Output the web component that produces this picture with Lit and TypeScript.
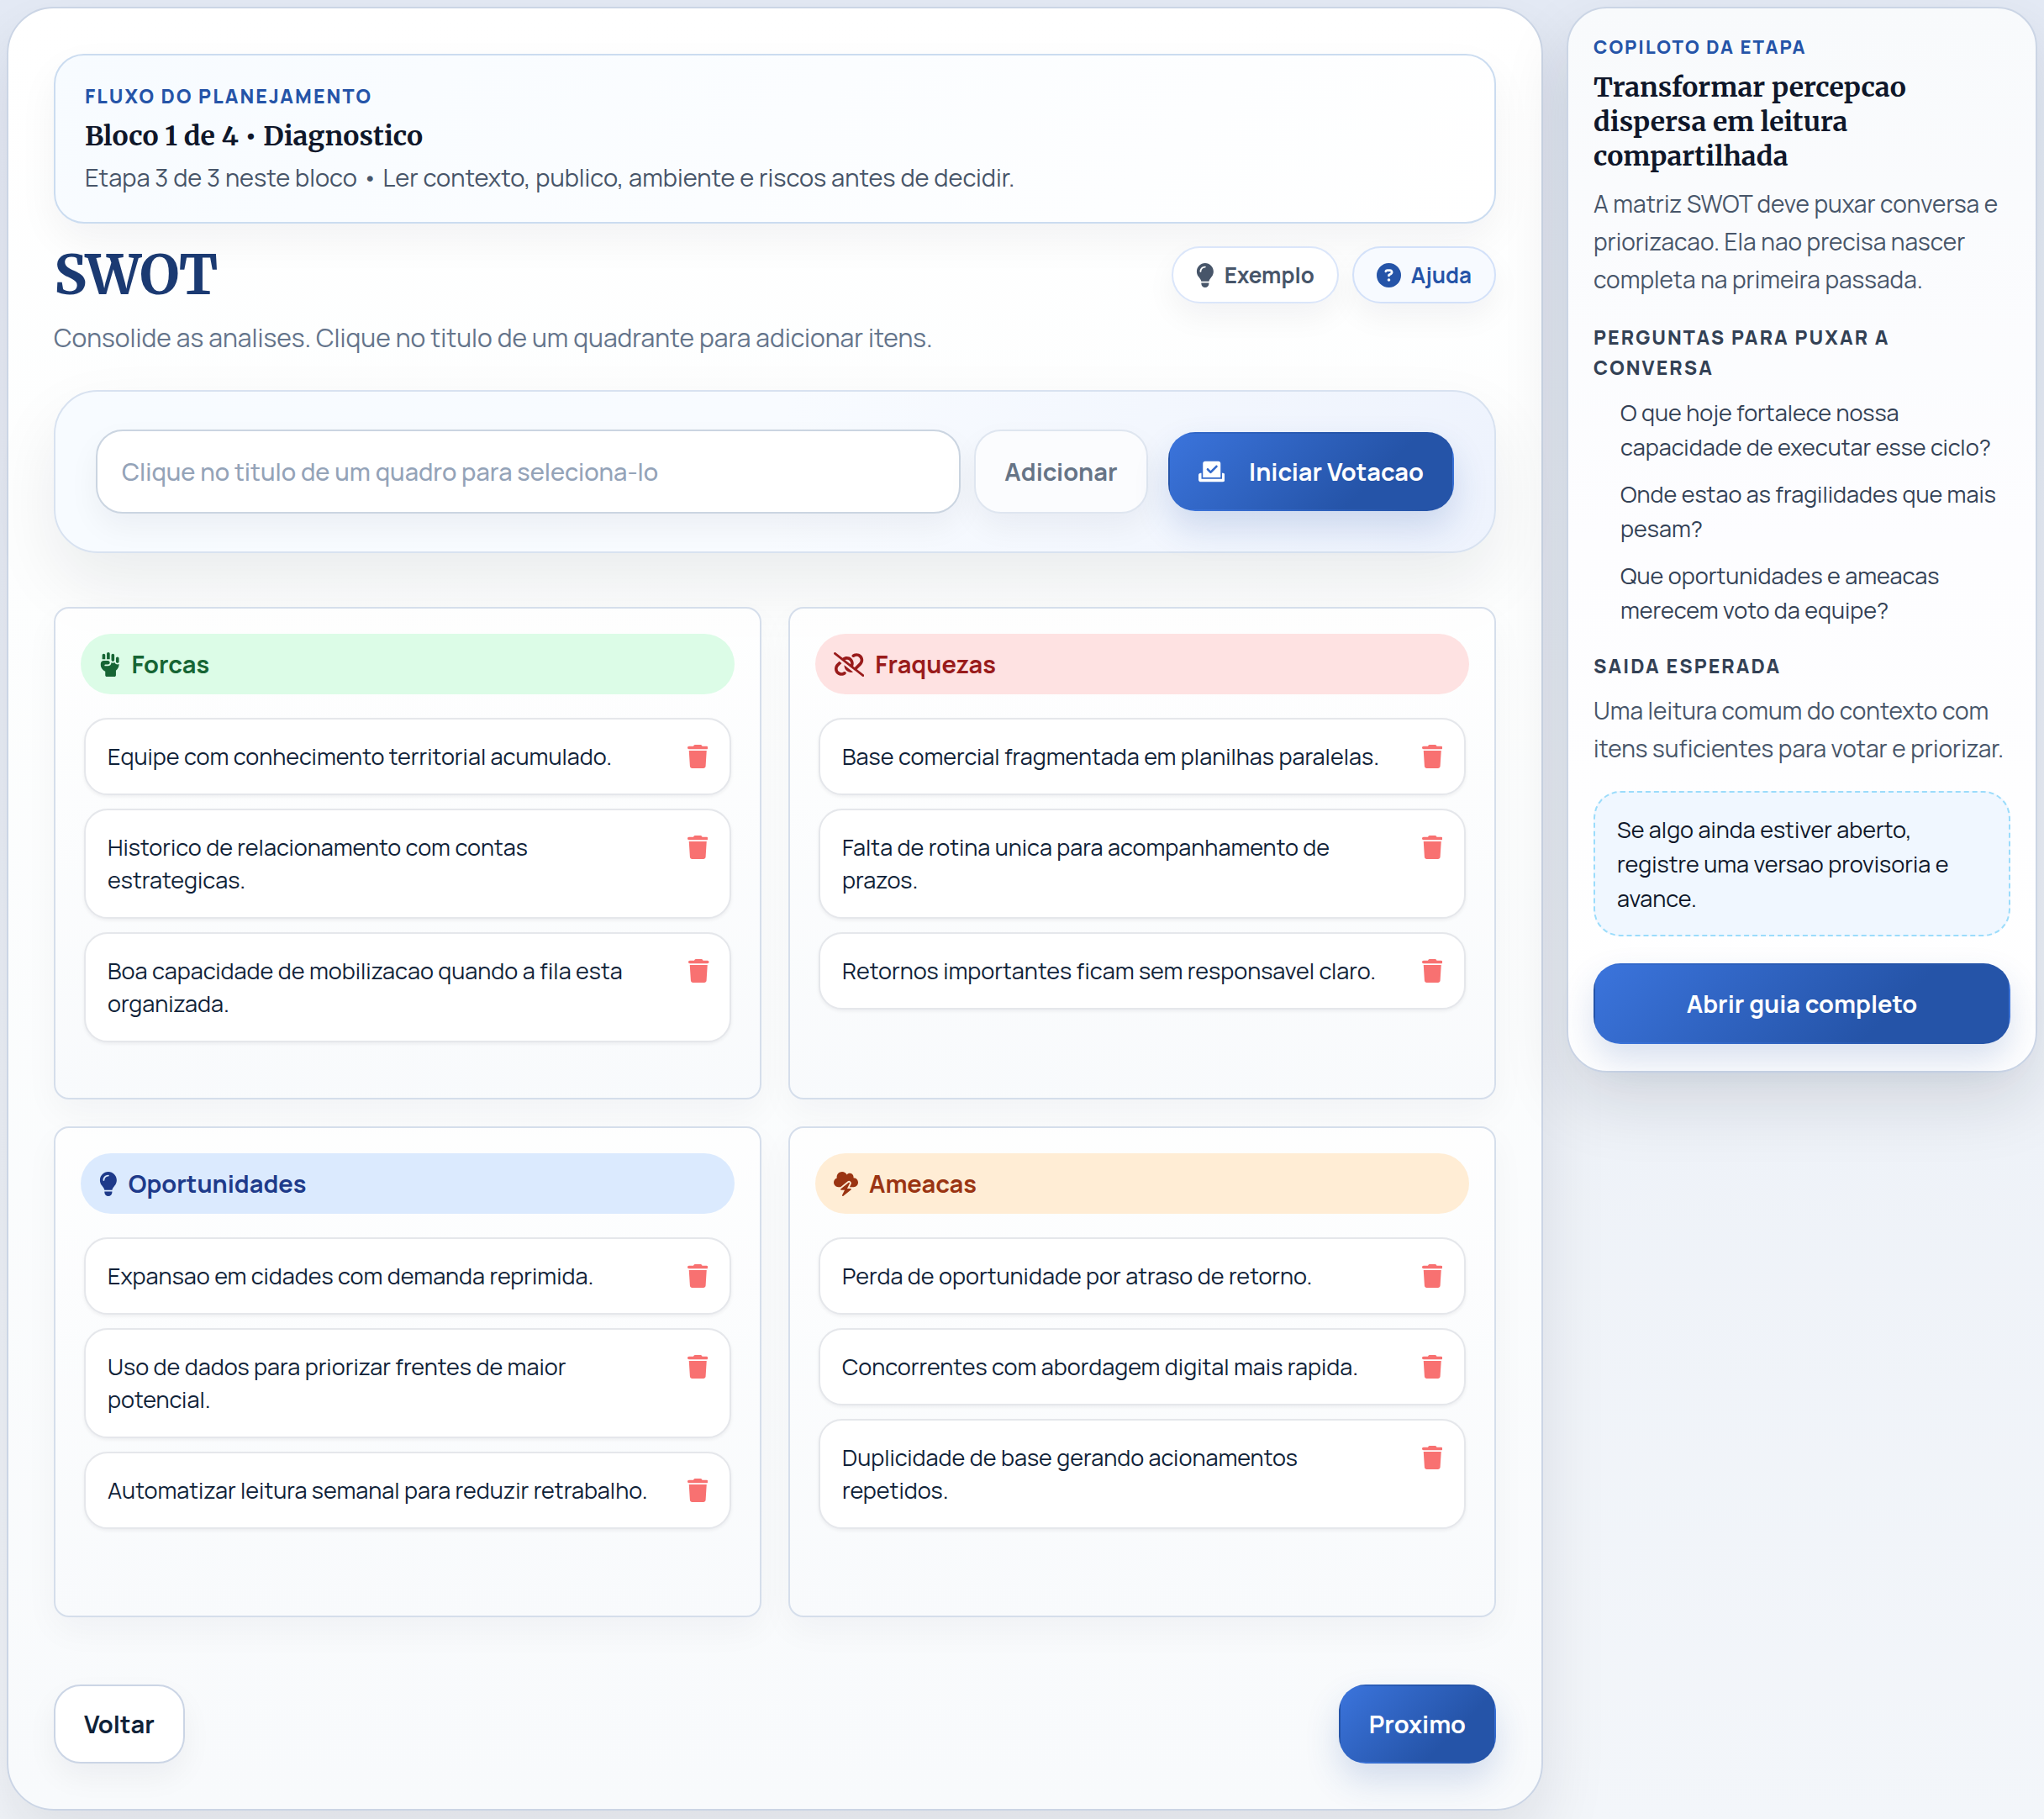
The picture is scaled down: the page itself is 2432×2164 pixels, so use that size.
import { LitElement, html, css, svg } from "lit";
import { customElement, property, state } from "lit/decorators.js";

type IconName = "bulb" | "help" | "fist" | "unlink" | "storm" | "trash" | "vote";

const ICONS: Record<IconName, { width: number; path: string }> = {
  bulb: { width: 384, path: "M272 384c9.6-31.9 29.5-59.1 49.2-86.2l0 0c5.2-7.1 10.4-14.2 15.4-21.4c19.8-28.5 31.4-63 31.4-100.3C368 78.8 289.2 0 192 0S16 78.8 16 176c0 37.3 11.6 71.9 31.4 100.3c5 7.2 10.2 14.3 15.4 21.4l0 0c19.8 27.1 39.7 54.4 49.2 86.2H272zM192 512c44.2 0 80-35.8 80-80V416H112v16c0 44.2 35.8 80 80 80zM112 176c0 8.8-7.2 16-16 16s-16-7.2-16-16c0-61.9 50.1-112 112-112c8.8 0 16 7.2 16 16s-7.2 16-16 16c-44.2 0-80 35.8-80 80z" },
  help: { width: 512, path: "M256 512A256 256 0 1 0 256 0a256 256 0 1 0 0 512zM169.8 165.3c7.9-22.3 29.1-37.3 52.8-37.3h58.3c34.9 0 63.1 28.3 63.1 63.1c0 22.6-12.1 43.5-31.7 54.8L280 264.4c-.2 13-10.9 23.6-24 23.6c-13.3 0-24-10.7-24-24V250.5c0-8.6 4.6-16.5 12.1-20.8l44.3-25.4c4.7-2.7 7.6-7.7 7.6-13.1c0-8.4-6.8-15.1-15.1-15.1H222.6c-3.4 0-6.4 2.1-7.5 5.3l-.4 1.2c-4.4 12.5-18.2 19-30.6 14.6s-19-18.2-14.6-30.6l.4-1.2zM224 352a32 32 0 1 1 64 0 32 32 0 1 1 -64 0z" },
  fist: { width: 448, path: "M192 0c17.7 0 32 14.3 32 32V144H160V32c0-17.7 14.3-32 32-32zM64 64c0-17.7 14.3-32 32-32s32 14.3 32 32v80H64V64zm192 0c0-17.7 14.3-32 32-32s32 14.3 32 32v96c0 17.7-14.3 32-32 32s-32-14.3-32-32V64zm96 64c0-17.7 14.3-32 32-32s32 14.3 32 32v64c0 17.7-14.3 32-32 32s-32-14.3-32-32V128zm-96 88l0-.6c9.4 5.4 20.3 8.6 32 8.6c13.2 0 25.4-4 35.6-10.8c8.7 24.9 32.5 42.8 60.4 42.8c11.7 0 22.6-3.1 32-8.6V256c0 52.3-25.1 98.8-64 128v96c0 17.7-14.3 32-32 32H160c-17.7 0-32-14.3-32-32V401.6c-17.3-7.9-33.2-18.8-46.9-32.5L69.5 357.5C45.5 333.5 32 300.9 32 267V240c0-35.3 28.7-64 64-64h88c22.1 0 40 17.9 40 40s-17.9 40-40 40H128c-8.8 0-16 7.2-16 16s7.2 16 16 16h56c39.8 0 72-32.2 72-72z" },
  unlink: { width: 640, path: "M38.8 5.1C28.4-3.1 13.3-1.2 5.1 9.2S-1.2 34.7 9.2 42.9l592 464c10.4 8.2 25.5 6.3 33.7-4.1s6.3-25.5-4.1-33.7L489.3 358.2l90.5-90.5c56.5-56.5 56.5-148 0-204.5c-50-50-128.8-56.5-186.3-15.4l-1.6 1.1c-14.4 10.3-17.7 30.3-7.4 44.6s30.3 17.7 44.6 7.4l1.6-1.1c32.1-22.9 76-19.3 103.8 8.6c31.5 31.5 31.5 82.5 0 114l-96 96-31.9-25C430.9 239.6 420.1 175.1 377 132c-52.2-52.3-134.5-56.2-191.3-11.7L38.8 5.1zM239 162c30.1-14.9 67.7-9.9 92.8 15.3c20 20 27.5 48.3 21.7 74.5L239 162zM406.6 416.4L220.9 270c-2.1 39.8 12.2 80.1 42.2 110c38.9 38.9 94.4 51 143.6 36.3zm-290-228.5L60.2 244.3c-56.5 56.5-56.5 148 0 204.5c50 50 128.8 56.5 186.3 15.4l1.6-1.1c14.4-10.3 17.7-30.3 7.4-44.6s-30.3-17.7-44.6-7.4l-1.6 1.1c-32.1 22.9-76 19.3-103.8-8.6C74 372 74 321 105.5 289.5l61.8-61.8-50.6-39.9z" },
  storm: { width: 512, path: "M0 224c0 53 43 96 96 96h47.2L290 202.5c17.6-14.1 42.6-14 60.2 .2s22.8 38.6 12.8 58.8L333.7 320H352h64c53 0 96-43 96-96s-43-96-96-96c-.5 0-1.1 0-1.6 0c1.1-5.2 1.6-10.5 1.6-16c0-44.2-35.8-80-80-80c-24.3 0-46.1 10.9-60.8 28C256.5 24.3 219.1 0 176 0C114.1 0 64 50.1 64 112c0 7.1 .7 14.1 1.9 20.8C27.6 145.4 0 181.5 0 224zm330.1 3.6c-5.8-4.7-14.2-4.7-20.1-.1l-160 128c-5.3 4.2-7.4 11.4-5.1 17.8s8.3 10.7 15.1 10.7h70.1L177.7 488.8c-3.4 6.7-1.6 14.9 4.3 19.6s14.2 4.7 20.1 .1l160-128c5.3-4.2 7.4-11.4 5.1-17.8s-8.3-10.7-15.1-10.7H281.9l52.4-104.8c3.4-6.7 1.6-14.9-4.3-19.6z" },
  trash: { width: 448, path: "M135.2 17.7L128 32H32C14.3 32 0 46.3 0 64S14.3 96 32 96H416c17.7 0 32-14.3 32-32s-14.3-32-32-32H320l-7.2-14.3C307.4 6.8 296.3 0 284.2 0H163.8c-12.1 0-23.2 6.8-28.6 17.7zM416 128H32L53.2 467c1.6 25.3 22.6 45 47.9 45H346.9c25.3 0 46.3-19.7 47.9-45L416 128z" },
  vote: { width: 576, path: "M96 80c0-26.5 21.5-48 48-48H432c26.5 0 48 21.5 48 48V384H96V80zm313 47c-9.4-9.4-24.6-9.4-33.9 0l-111 111-47-47c-9.4-9.4-24.6-9.4-33.9 0s-9.4 24.6 0 33.9l64 64c9.4 9.4 24.6 9.4 33.9 0L409 161c9.4-9.4 9.4-24.6 0-33.9zM0 336c0-26.5 21.5-48 48-48H64V416H512V288h16c26.5 0 48 21.5 48 48v96c0 26.5-21.5 48-48 48H48c-26.5 0-48-21.5-48-48V336z" },
};

const icon = (name: IconName) => html`<svg
  class="icon"
  viewBox="0 0 ${ICONS[name].width} 512"
  aria-hidden="true"
>${svg`<path fill="currentColor" d=${ICONS[name].path}></path>`}</svg>`;

interface Quadrant {
  id: string;
  title: string;
  icon: IconName;
  items: string[];
}

const QUADRANTS: Quadrant[] = [
  {
    id: "forcas",
    title: "Forcas",
    icon: "fist",
    items: [
      "Equipe com conhecimento territorial acumulado.",
      "Historico de relacionamento com contas estrategicas.",
      "Boa capacidade de mobilizacao quando a fila esta organizada.",
    ],
  },
  {
    id: "fraquezas",
    title: "Fraquezas",
    icon: "unlink",
    items: [
      "Base comercial fragmentada em planilhas paralelas.",
      "Falta de rotina unica para acompanhamento de prazos.",
      "Retornos importantes ficam sem responsavel claro.",
    ],
  },
  {
    id: "oportunidades",
    title: "Oportunidades",
    icon: "bulb",
    items: [
      "Expansao em cidades com demanda reprimida.",
      "Uso de dados para priorizar frentes de maior potencial.",
      "Automatizar leitura semanal para reduzir retrabalho.",
    ],
  },
  {
    id: "ameacas",
    title: "Ameacas",
    icon: "storm",
    items: [
      "Perda de oportunidade por atraso de retorno.",
      "Concorrentes com abordagem digital mais rapida.",
      "Duplicidade de base gerando acionamentos repetidos.",
    ],
  },
];

const shared = css`
  * {
    box-sizing: border-box;
  }
  h1,
  h2,
  h3,
  p,
  ul {
    margin: 0;
    padding: 0;
  }
  ul {
    list-style: none;
  }
  button {
    font-family: inherit;
    cursor: pointer;
  }
  .icon {
    display: block;
    flex: none;
    height: 29px;
    width: auto;
  }
  .eyebrow {
    color: #2554a8;
    font-size: 23px;
    font-weight: 800;
    line-height: 36px;
    letter-spacing: 0.09em;
    text-transform: uppercase;
  }
  .title {
    margin-top: 10px;
    color: #0f172a;
    font-family: Merriweather, "Noto Serif", "DejaVu Serif", serif;
    font-size: 32px;
    font-weight: 700;
    line-height: 41px;
  }
  .btn {
    display: inline-flex;
    align-items: center;
    justify-content: center;
    gap: 29px;
    padding: 0 34px;
    height: 94px;
    border: 2px solid #cbd5e5;
    border-radius: 32px;
    background: #fff;
    color: #0f2238;
    font-size: 29px;
    font-weight: 700;
    white-space: nowrap;
    box-shadow: 0 16px 36px rgba(15, 23, 42, 0.05);
  }
  .btn.primary {
    border-color: transparent;
    background: linear-gradient(135deg, #3b74dc 0%, #2554a8 70%);
    color: #fff;
    box-shadow: 0 20px 40px rgba(37, 84, 168, 0.18);
  }
  .btn .icon {
    height: 28px;
  }
`;

@customElement("swot-quadrant")
export class SwotQuadrant extends LitElement {
  @property({ attribute: false }) data!: Quadrant;

  static styles = [
    shared,
    css`
      :host {
        display: block;
        min-height: 584px;
        padding: 30px 30px 66px;
        border: 2px solid #d5deeb;
        border-radius: 18px;
        background: linear-gradient(180deg, rgba(255, 255, 255, 0.7), rgba(248, 250, 252, 0.9));
        box-shadow: 0 16px 40px rgba(15, 23, 42, 0.04);
      }
      .heading {
        display: flex;
        align-items: center;
        gap: 13px;
        width: 100%;
        height: 72px;
        padding: 0 22px;
        border: 0;
        border-radius: 36px;
        font-size: 29px;
        font-weight: 700;
      }
      .forcas {
        background: #dcfce7;
        color: #166534;
      }
      .fraquezas {
        background: #fee2e2;
        color: #991b1b;
      }
      .oportunidades {
        background: #dbeafe;
        color: #1e3a8a;
      }
      .ameacas {
        background: #ffedd5;
        color: #9a3412;
      }
      .list {
        display: flex;
        flex-direction: column;
        gap: 16px;
        padding: 28px 4px 0;
      }
      .item {
        display: flex;
        align-items: flex-start;
        justify-content: space-between;
        gap: 36px;
        padding: 24px 26px 25px;
        border: 2px solid #e5e7eb;
        border-radius: 28px;
        background: #fff;
        color: #0f2238;
        font-size: 27px;
        line-height: 39px;
        box-shadow: 0 2px 4px rgba(15, 23, 42, 0.06);
      }
      .remove {
        display: grid;
        place-items: center;
        height: 39px;
        padding: 0;
        border: 0;
        background: none;
        color: #f87171;
      }
      .remove .icon {
        height: 28px;
      }
    `,
  ];

  render() {
    const { id, title, items } = this.data;
    return html`
      <h3><button class="heading ${id}" type="button">${icon(this.data.icon)}${title}</button></h3>
      <ul class="list">
        ${items.map(
          (text) => html`<li class="item">
            <span>${text}</span>
            <button class="remove" type="button" aria-label="Remover">${icon("trash")}</button>
          </li>`,
        )}
      </ul>
    `;
  }
}

@customElement("step-copilot")
export class StepCopilot extends LitElement {
  static styles = [
    shared,
    css`
      :host {
        display: block;
        padding: 28px 30px 32px;
        border: 2px solid #cbd5e5;
        border-radius: 48px;
        background: linear-gradient(180deg, #f8fafc, #fdfdff 50%, #fff);
        box-shadow: 0 36px 80px rgba(15, 23, 42, 0.12);
      }
      .lead-in {
        font-size: 22px;
      }
      .text {
        margin-top: 13px;
        color: #475569;
        font-size: 28px;
        line-height: 45px;
      }
      .section {
        margin-top: 28px;
        color: #334155;
      }
      .questions {
        display: flex;
        flex-direction: column;
        gap: 15px;
        margin-top: 15px;
        padding-left: 32px;
        color: #334155;
        font-size: 27px;
        line-height: 41px;
      }
      .note {
        margin-top: 28px;
        padding: 23px 26px;
        border: 2px dashed #9bdcfb;
        border-radius: 32px;
        background: #f0f7ff;
        color: #0f172a;
        font-size: 27px;
        line-height: 41px;
      }
      .guide {
        width: 100%;
        height: 96px;
        margin-top: 32px;
      }
    `,
  ];

  render() {
    return html`
      <p class="eyebrow lead-in">Copiloto da etapa</p>
      <h2 class="title">Transformar percepcao dispersa em leitura compartilhada</h2>
      <p class="text">A matriz SWOT deve puxar conversa e priorizacao. Ela nao precisa nascer completa na primeira passada.</p>
      <h3 class="eyebrow section">Perguntas para puxar a conversa</h3>
      <ul class="questions">
        <li>O que hoje fortalece nossa capacidade de executar esse ciclo?</li>
        <li>Onde estao as fragilidades que mais pesam?</li>
        <li>Que oportunidades e ameacas merecem voto da equipe?</li>
      </ul>
      <h3 class="eyebrow section">Saida esperada</h3>
      <p class="text">Uma leitura comum do contexto com itens suficientes para votar e priorizar.</p>
      <p class="note">Se algo ainda estiver aberto, registre uma versao provisoria e avance.</p>
      <button class="btn primary guide" type="button">Abrir guia completo</button>
    `;
  }
}

@customElement("app-root")
export class AppRoot extends LitElement {
  @state() private draft = "";

  static styles = [
    shared,
    css`
      :host {
        display: grid;
        grid-template-columns: minmax(0, 1fr) 560px;
        align-items: start;
        gap: 28px;
        min-height: 100vh;
        padding: 8px 8px 10px;
        background: linear-gradient(180deg, #e4eaf5, #eef2f8 60%, #f3f6fa);
        font-family: Manrope, Inter, "Open Sans", sans-serif;
      }
      .board {
        padding: 54px;
        border: 2px solid #cbd5e5;
        border-radius: 56px;
        background: linear-gradient(180deg, #fff, #fdfefe 30%, #f8fafc);
        box-shadow: 0 36px 80px rgba(15, 23, 42, 0.1);
      }
      .flow {
        padding: 30px 35px;
        border: 2px solid #cbdcf0;
        border-radius: 36px;
        background: linear-gradient(135deg, #f7fbff, #fff);
        box-shadow: 0 20px 48px rgba(15, 23, 42, 0.05);
      }
      .flow-text {
        margin-top: 6px;
        color: #475569;
        font-size: 29px;
        line-height: 45px;
      }
      .head {
        display: flex;
        align-items: center;
        justify-content: space-between;
        margin-top: 24px;
      }
      .name {
        color: #1b3a72;
        font-family: Merriweather, "Noto Serif", "DejaVu Serif", serif;
        font-size: 65px;
        font-weight: 700;
        line-height: 74px;
        letter-spacing: -0.02em;
      }
      .actions {
        display: flex;
        gap: 16px;
      }
      .pill {
        display: inline-flex;
        align-items: center;
        gap: 12px;
        height: 68px;
        padding: 0 27px;
        border: 2px solid #dbe6fa;
        border-radius: 34px;
        background: #fff;
        color: #475569;
        font-size: 26px;
        font-weight: 700;
        box-shadow: 0 16px 36px rgba(15, 23, 42, 0.05);
      }
      .pill.help {
        border-color: #d3e1f9;
        background: #f7faff;
        color: #2554a8;
      }
      .lead {
        margin-top: 14px;
        color: #64748b;
        font-size: 30px;
        line-height: 48px;
      }
      .composer {
        display: flex;
        align-items: center;
        gap: 24px;
        margin-top: 38px;
        padding: 45px 48px;
        border: 2px solid #d8e2f0;
        border-radius: 52px;
        background: linear-gradient(100deg, #f7fbff, #f8fbff 50%, #eef3fd);
        box-shadow: 0 36px 80px rgba(15, 23, 42, 0.08);
      }
      .entry {
        display: flex;
        flex: 1;
        gap: 16px;
        min-width: 0;
      }
      .field {
        flex: 1;
        min-width: 0;
        height: 100px;
        padding: 0 29px;
        border: 2px solid #cbd5e1;
        border-radius: 32px;
        background: #fff;
        font: inherit;
        font-size: 29px;
        font-weight: 500;
        color: #0f172a;
        box-shadow: 0 16px 36px rgba(15, 23, 42, 0.05);
      }
      .field::placeholder {
        color: #94a3b8;
        opacity: 1;
      }
      .entry .btn {
        height: 100px;
        border-color: #dfe6f0;
        background: #fbfcfe;
        color: #667486;
      }
      .quadrants {
        display: grid;
        grid-template-columns: repeat(2, minmax(0, 1fr));
        gap: 32px;
        margin-top: 64px;
      }
      .footer {
        display: flex;
        justify-content: space-between;
        margin-top: 80px;
      }
    `,
  ];

  render() {
    return html`
      <main class="board">
        <section class="flow">
          <p class="eyebrow">Fluxo do planejamento</p>
          <h2 class="title">Bloco 1 de 4 • Diagnostico</h2>
          <p class="flow-text">Etapa 3 de 3 neste bloco • Ler contexto, publico, ambiente e riscos antes de decidir.</p>
        </section>
        <header class="head">
          <h1 class="name">SWOT</h1>
          <div class="actions">
            <button class="pill" type="button">${icon("bulb")}Exemplo</button>
            <button class="pill help" type="button">${icon("help")}Ajuda</button>
          </div>
        </header>
        <p class="lead">Consolide as analises. Clique no titulo de um quadrante para adicionar itens.</p>
        <section class="composer">
          <div class="entry">
            <input
              class="field"
              type="text"
              aria-label="Novo item"
              placeholder="Clique no titulo de um quadro para seleciona-lo"
              .value=${this.draft}
              @input=${(e: Event) => (this.draft = (e.target as HTMLInputElement).value)}
            />
            <button class="btn" type="button">Adicionar</button>
          </div>
          <button class="btn primary" type="button">${icon("vote")}Iniciar Votacao</button>
        </section>
        <section class="quadrants">
          ${QUADRANTS.map((q) => html`<swot-quadrant .data=${q}></swot-quadrant>`)}
        </section>
        <footer class="footer">
          <button class="btn" type="button">Voltar</button>
          <button class="btn primary" type="button">Proximo</button>
        </footer>
      </main>
      <aside><step-copilot></step-copilot></aside>
    `;
  }
}
